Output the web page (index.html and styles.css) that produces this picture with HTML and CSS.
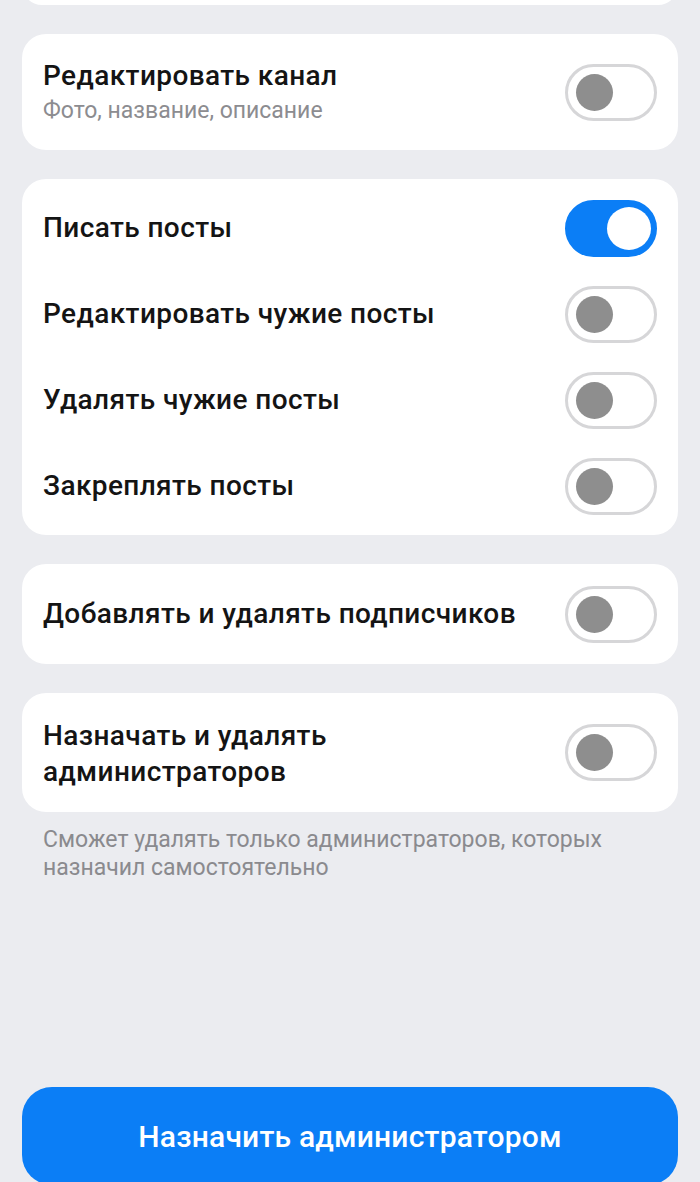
FILE: index.html
```html
<!DOCTYPE html>
<html lang="ru">
<head>
<meta charset="utf-8">
<link rel="stylesheet" href="styles.css">
</head>
<body>
<div class="page">
  <div class="card card-prev"></div>

  <div class="card card-single">
    <div class="row row-tall">
      <div class="text">
        <div class="title">Редактировать канал</div>
        <div class="sub">Фото, название, описание</div>
      </div>
      <span class="toggle"></span>
    </div>
  </div>

  <div class="card card-list">
    <div class="row"><div class="title">Писать посты</div><span class="toggle on"></span></div>
    <div class="row"><div class="title">Редактировать чужие посты</div><span class="toggle"></span></div>
    <div class="row"><div class="title">Удалять чужие посты</div><span class="toggle"></span></div>
    <div class="row"><div class="title">Закреплять посты</div><span class="toggle"></span></div>
  </div>

  <div class="card card-one">
    <div class="row row-one"><div class="title">Добавлять и удалять подписчиков</div><span class="toggle"></span></div>
  </div>

  <div class="card card-two">
    <div class="row row-two"><div class="title two-line">Назначать и удалять<br>администраторов</div><span class="toggle"></span></div>
  </div>

  <p class="note">Сможет удалять только администраторов, которых<br>назначил самостоятельно</p>

  <button class="primary">Назначить администратором</button>
</div>
</body>
</html>
```

FILE: styles.css
```css
html, body {
  margin: 0;
  padding: 0;
  height: 1182px;
  overflow: hidden;
  background: #ebecf0;
}
body {
  font-family: Roboto, "Noto Sans", "Liberation Sans", sans-serif;
  color: #141414;
}
.page {
  display: flex;
  flex-direction: column;
  padding: 0 22px;
}
.card {
  background: #fff;
  border-radius: 24px;
}
.card-prev {
  height: 40px;
  margin-top: -35px;
}
.card-single {
  margin-top: 29px;
  height: 116px;
  display: flex;
  flex-direction: column;
  justify-content: center;
}
.card-list {
  margin-top: 29px;
  padding: 6px 0;
}
.card-one {
  margin-top: 29px;
  height: 100px;
  display: flex;
  flex-direction: column;
  justify-content: center;
}
.card-two {
  margin-top: 29px;
  height: 119px;
  display: flex;
  flex-direction: column;
  justify-content: center;
}
.row {
  display: flex;
  align-items: center;
  justify-content: space-between;
  padding: 0 21px;
  height: 86px;
}
.row-tall { height: auto; }
.row-one, .row-two { height: auto; }
.text {
  display: flex;
  flex-direction: column;
  gap: 3px;
  margin-top: 0;
}
.title {
  font-size: 28px;
  font-weight: 500;
  line-height: 34px;
  letter-spacing: 0.4px;
}
.two-line {
  line-height: 36px;
  margin-top: 2px;
}
.sub {
  font-size: 23px;
  line-height: 30px;
  color: #8c8c90;
}
.toggle {
  flex: none;
  position: relative;
  width: 92px;
  height: 57px;
  box-sizing: border-box;
  border: 3px solid #d6d6d8;
  border-radius: 29px;
  background: #fff;
}
.toggle::after {
  content: "";
  position: absolute;
  left: 8px;
  top: 7px;
  width: 37px;
  height: 37px;
  border-radius: 50%;
  background: #8e8e8e;
}
.toggle.on {
  background: #0b7ef6;
  border-color: #0b7ef6;
}
.toggle.on::after {
  left: 39px;
  top: 4px;
  width: 44px;
  height: 43px;
  background: #fff;
}
.note {
  margin: 14px 0 0;
  padding: 0 21px;
  font-size: 23px;
  line-height: 28px;
  color: #8a8a8e;
}
.primary {
  margin-top: 205px;
  height: 98px;
  border: 0;
  border-radius: 30px;
  background: #0b7ef6;
  color: #fff;
  font-family: Roboto, "Noto Sans", "Liberation Sans", sans-serif;
  font-size: 30px;
  font-weight: 500;
  letter-spacing: 0.2px;
}
```
